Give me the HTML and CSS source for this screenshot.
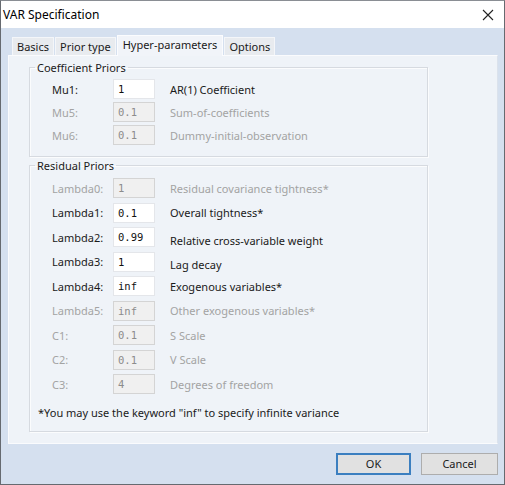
FILE: index.html
```html
<!DOCTYPE html>
<html>
<head>
<meta charset="utf-8">
<link rel="stylesheet" href="styles.css">
</head>
<body>
<div class="window">
  <div class="titlebar">
    <span class="title">VAR Specification</span>
    <svg class="close" width="12" height="12" viewBox="0 0 12 12"><path d="M1 1 L11 11 M11 1 L1 11" stroke="#222" stroke-width="1.1" fill="none"/></svg>
  </div>
  <div class="client">
    <div class="tabs">
      <div class="tab">Basics</div>
      <div class="tab">Prior type</div>
      <div class="tab active">Hyper-parameters</div>
      <div class="tab">Options</div>
    </div>
    <div class="panel">
      <fieldset class="group g1">
        <legend>Coefficient Priors</legend>
        <div class="rows r1">
          <div class="row"><span class="lbl">Mu1:</span><span class="inp">1</span><span class="desc">AR(1) Coefficient</span></div>
          <div class="row dis"><span class="lbl">Mu5:</span><span class="inp">0.1</span><span class="desc">Sum-of-coefficients</span></div>
          <div class="row dis"><span class="lbl">Mu6:</span><span class="inp">0.1</span><span class="desc">Dummy-initial-observation</span></div>
        </div>
      </fieldset>
      <fieldset class="group g2">
        <legend>Residual Priors</legend>
        <div class="rows r2">
          <div class="row dis"><span class="lbl">Lambda0:</span><span class="inp">1</span><span class="desc">Residual covariance tightness*</span></div>
          <div class="row"><span class="lbl">Lambda1:</span><span class="inp">0.1</span><span class="desc">Overall tightness*</span></div>
          <div class="row"><span class="lbl">Lambda2:</span><span class="inp">0.99</span><span class="desc low">Relative cross-variable weight</span></div>
          <div class="row"><span class="lbl">Lambda3:</span><span class="inp">1</span><span class="desc low">Lag decay</span></div>
          <div class="row"><span class="lbl">Lambda4:</span><span class="inp">inf</span><span class="desc">Exogenous variables*</span></div>
          <div class="row dis"><span class="lbl">Lambda5:</span><span class="inp">inf</span><span class="desc">Other exogenous variables*</span></div>
          <div class="row dis"><span class="lbl">C1:</span><span class="inp">0.1</span><span class="desc">S Scale</span></div>
          <div class="row dis"><span class="lbl">C2:</span><span class="inp">0.1</span><span class="desc">V Scale</span></div>
          <div class="row dis"><span class="lbl">C3:</span><span class="inp">4</span><span class="desc">Degrees of freedom</span></div>
        </div>
        <div class="note">*You may use the keyword "inf" to specify infinite variance</div>
      </fieldset>
    </div>
    <div class="buttons">
      <div class="btn ok">OK</div>
      <div class="btn">Cancel</div>
    </div>
  </div>
</div>
</body>
</html>
```
FILE: styles.css
```css
* { box-sizing: border-box; }
html, body { margin: 0; padding: 0; }
body {
  font-family: "Noto Sans", "Open Sans", sans-serif;
  font-size: 11px;
  color: #1a1a1a;
  background: #fff;
}
.window {
  width: 505px;
  height: 485px;
  border: 1px solid #666a70;
  border-top-color: #8a8e94;
  display: flex;
  flex-direction: column;
  background: #d5e0ef;
}
.titlebar {
  height: 27px;
  background: #fff;
  display: flex;
  align-items: center;
  justify-content: space-between;
  padding: 0 10px 0 2px;
  flex: none;
}
.title { font-size: 12px; color: #000; }
.close { display: block; }
.client {
  flex: 1;
  display: flex;
  flex-direction: column;
  padding: 7px 6px 0 7px;
}
.tabs {
  display: flex;
  align-items: flex-end;
  padding-left: 4px;
  height: 20px;
  position: relative;
  z-index: 1;
}
.tab {
  height: 18px;
  line-height: 17px;
  padding: 0 4px;
  background: #e8ebef;
  border: 1px solid #f4f6f9;
  border-bottom: none;
  color: #1a1a1a;
  margin-right: 1px;
}
.tab.active {
  height: 21px;
  margin-bottom: -1px;
  line-height: 18px;
  background: #f1f4f9;
  border-color: #fbfcfe;
  padding: 0 5px;
}
.panel {
  height: 389px;
  background: #eff3f8;
  border: 1px solid #fafbfd;
  border-right-color: #dbe2ec;
  padding: 4px 69px 0 20px;
}
.group {
  margin: 0;
  border: 1px solid #d6dae0;
  box-shadow: inset 1px 1px 0 #fbfcfd, 1px 1px 0 #fbfcfd;
  padding: 0;
}
.group legend {
  padding: 0 2px;
  margin-left: 5px;
  font-size: 11px;
  line-height: 15px;
  color: #1a1a1a;
}
.g1 { height: 97px; }
.g2 { margin-top: 1px; height: 274px; }
.rows {
  display: flex;
  flex-direction: column;
}
.r1 { gap: 3px; padding-top: 4px; }
.r2 { gap: 4.5px; padding-top: 5px; }
.row {
  display: flex;
  align-items: center;
  height: 20px;
}
.lbl {
  width: 61px;
  padding-left: 22px;
  box-sizing: content-box;
  color: #1a1a1a;
}
.inp {
  width: 42px;
  height: 20px;
  background: #fff;
  border: 1px solid #e4e6ea;
  font-family: "DejaVu Sans Mono", monospace;
  font-size: 10.5px;
  line-height: 18px;
  padding-left: 4px;
  color: #111;
}
.desc {
  margin-left: 15px;
  color: #1a1a1a;
}
.desc.low { position: relative; top: 3px; }
.dis .lbl, .dis .desc { color: #a3a3a3; }
.dis .inp {
  background: #f0f0f0;
  border-color: #d4d4d4;
  color: #8c8c8c;
}
.note {
  margin-top: 11px;
  padding-left: 8px;
  color: #1a1a1a;
}
.buttons {
  display: flex;
  justify-content: flex-end;
  gap: 10px;
  padding-top: 9px;
}
.btn {
  width: 77px;
  height: 22px;
  background: #e1e1e1;
  border: 1px solid #adadad;
  text-align: center;
  line-height: 20px;
  color: #1a1a1a;
}
.btn.ok {
  width: 75px;
  border: 2px solid #3b7fc0;
  line-height: 18px;
}
```
